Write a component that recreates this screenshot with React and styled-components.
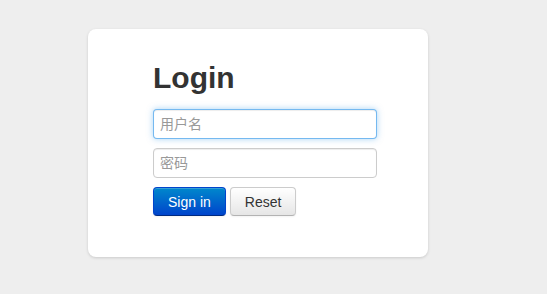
import React from 'react'
import styled, { createGlobalStyle } from 'styled-components'

const GlobalStyle = createGlobalStyle`
  html, body {
    margin: 0;
    padding: 0;
    background: #eeeeee;
    font-family: "Liberation Sans", Arial, "Noto Sans CJK SC", sans-serif;
  }
`

const Page = styled.div`
  width: 547px;
  height: 294px;
  padding: 29px 0 0 88px;
  box-sizing: border-box;
`

const Card = styled.div`
  width: 340px;
  box-sizing: border-box;
  padding: 31px 51px 41px 65px;
  background: #fff;
  border-radius: 8px;
  box-shadow: 0 1px 3px rgba(0, 0, 0, 0.15);
`

const Title = styled.h1`
  margin: 0 0 13px;
  font-size: 30px;
  line-height: 36px;
  font-weight: 700;
  color: #333;
`

const Form = styled.form`
  display: flex;
  flex-direction: column;
  gap: 9px;
`

const Input = styled.input`
  width: 224px;
  height: 30px;
  box-sizing: border-box;
  padding: 4px 6px;
  font-size: 14px;
  font-family: "Liberation Sans", Arial, "Noto Sans CJK SC", sans-serif;
  color: #555;
  background: #fff;
  border: 1px solid ${p => (p.$focused ? 'rgba(82, 168, 236, 0.8)' : '#ccc')};
  border-radius: 4px;
  outline: none;
  box-shadow: ${p =>
    p.$focused
      ? 'inset 0 1px 1px rgba(0,0,0,.075), 0 0 6px rgba(82,168,236,.5)'
      : 'inset 0 1px 1px rgba(0,0,0,.075)'};

  &::placeholder {
    color: #999;
  }
`

const Actions = styled.div`
  display: flex;
  gap: 4px;
`

const Button = styled.button`
  height: 29px;
  padding: 0 14px;
  font-size: 14px;
  font-family: "Liberation Sans", Arial, sans-serif;
  border-radius: 4px;
  cursor: pointer;
  color: ${p => (p.$primary ? '#fff' : '#333')};
  background: ${p =>
    p.$primary
      ? 'linear-gradient(to bottom, #0088cc, #0044cc)'
      : 'linear-gradient(to bottom, #ffffff, #e6e6e6)'};
  border: 1px solid ${p => (p.$primary ? '#0044cc' : '#ccc')};
  border-bottom-color: ${p => (p.$primary ? '#002a80' : '#b3b3b3')};
  box-shadow: inset 0 1px 0 rgba(255, 255, 255, 0.2), 0 1px 2px rgba(0, 0, 0, 0.05);
`

export default function App() {
  return (
    <>
      <GlobalStyle />
      <Page>
        <Card>
          <Title>Login</Title>
          <Form onSubmit={e => e.preventDefault()}>
            <Input $focused placeholder="用户名" />
            <Input type="password" placeholder="密码" />
            <Actions>
              <Button $primary type="submit">Sign in</Button>
              <Button type="reset">Reset</Button>
            </Actions>
          </Form>
        </Card>
      </Page>
    </>
  )
}
